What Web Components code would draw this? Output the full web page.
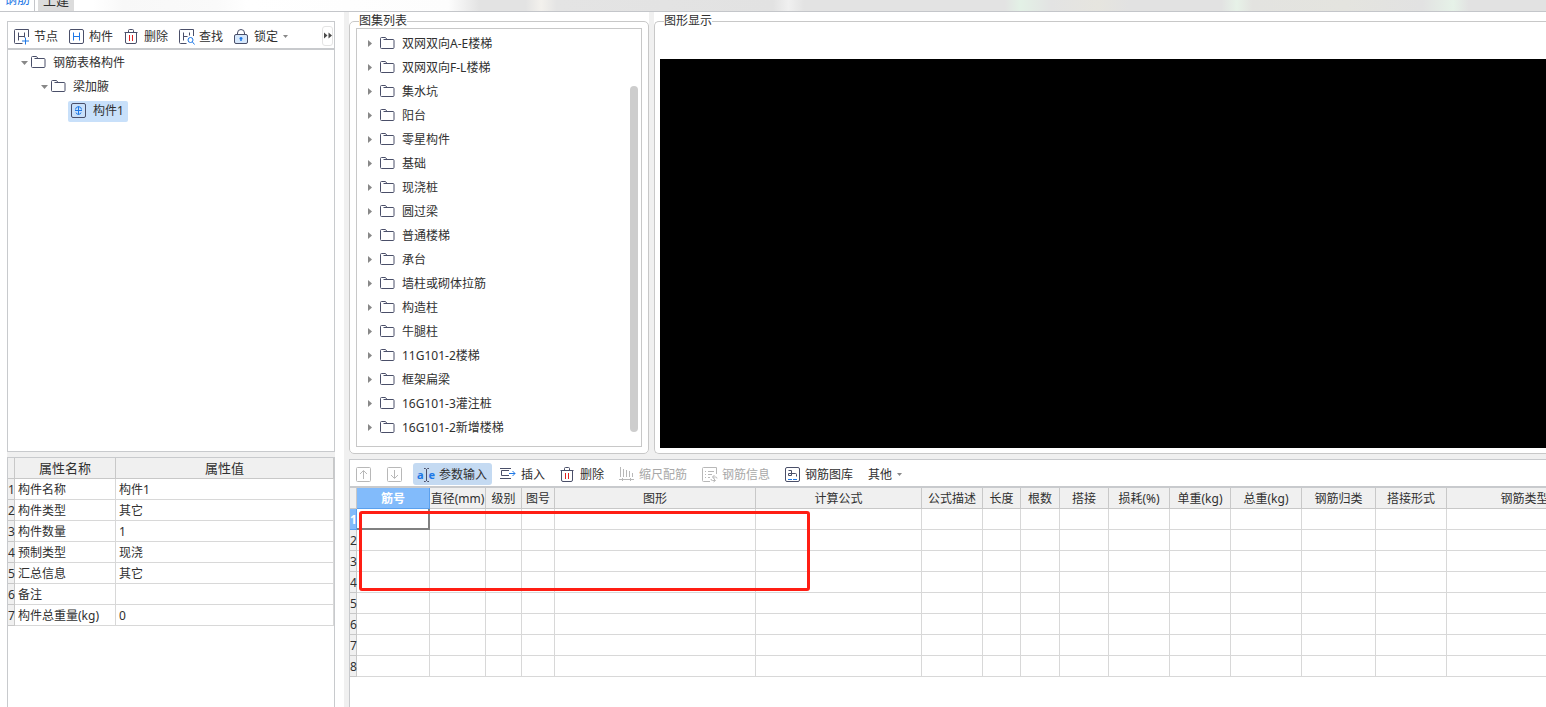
<!DOCTYPE html>
<html lang="zh-CN">
<head>
<meta charset="utf-8">
<title>表格输入</title>
<style>
html, body { margin: 0; height: 100%; }
body {
  font: 12px/20px "Noto Sans", "Noto Sans CJK SC", sans-serif;
  color: #303030; background: #fff; overflow: hidden;
  --line: #c8c8c8; --soft: #d8d8d8; --pane: #f0f0f0;
}
</style>
</head>
<body>
<rebar-app></rebar-app>
<script>
const define = (name, html) => customElements.define(name, class extends HTMLElement {
  connectedCallback() {
    if (this.shadowRoot) return;
    const t = document.createElement('template');
    t.innerHTML = typeof html === 'function' ? html(this) : html;
    this.attachShadow({ mode: 'open' }).append(t.content.cloneNode(true));
  }
});

const K = '#4a4f69', B = '#1e78e6', G = '#b8b8b8';
const icons = {
  node: `<path d="M8.500 14.500h-7q-1 0-1-1v-12q0-1 1-1h13V8M4.500 3.500v8M4.500 7.500h6M10.500 3.500v5" stroke="${K}"/><path d="M8 12h7M11.500 8.500v7" stroke="${B}"/>`,
  part: `<rect x=".5" y=".5" width="14" height="14" rx="1.500" stroke="${K}"/><path d="M4.500 3.500v8M10.500 3.500v8M4.500 7.500h6" stroke="${B}"/>`,
  bin: `<path d="M.5 3.500h13M4.500 3V1.500q0-1 1-1h3q1 0 1 1V3M1.500 4v9q0 1.500 1.500 1.500h8q1.500 0 1.500-1.500V4" stroke="${K}"/><path d="M5.500 6v6M8.500 6v6" stroke="#e02020"/>`,
  find: `<path d="M7.500 14.500h-6q-1 0-1-1v-12q0-1 1-1h13V7M4.500 3.500v8M4.500 7.500h4M10.500 3.500v3" stroke="${K}"/><circle cx="11.500" cy="11" r="2.500" stroke="${B}"/><path d="M13.500 13l2 2.500" stroke="${B}"/>`,
  lock: `<path d="M3.500 6V4a3.500 3.500 0 0 1 7 0v2" stroke="${K}"/><rect x=".5" y="5.500" width="13" height="9" rx="1.500" stroke="${K}" fill="#d6e8fc"/><path d="M7 8v4M5.500 9.500h3" stroke="${B}" stroke-width="1.500"/>`,
  folder: `<path d="M.5 2.500q0-1 1-1h4l1.500 2h6q1 0 1 1v7q0 1-1 1h-11.500q-1 0-1-1zM7 3.500H3.500" stroke="${K}"/>`,
  leaf: `<rect x=".5" y=".5" width="14" height="14" rx="1.500" stroke="${K}"/><path d="M7.500 3.500v8M4 7.500h7M7.500 3.500q-3 .5-3 3M7.500 3.500q3 .5 3 3M5 9.500q0 1.500 2.500 2q2.500-.5 2.500-2" stroke="${B}"/>`,
  up: `<rect x=".5" y=".5" width="14" height="14" rx="1" stroke="${G}"/><path d="M7.500 12V4M4 7l3.500-3.500L11 7" stroke="${G}"/>`,
  down: `<rect x=".5" y=".5" width="14" height="14" rx="1" stroke="${G}"/><path d="M7.500 3v8M4 8l3.500 3.500L11 8" stroke="${G}"/>`,
  insert: `<path d="M0 1.500h11M0 11.500h11M9 3.500H1.500v5H9" stroke="${K}"/><path d="M9 6.500h6M12.500 4l2.500 2.500L12.500 9" stroke="${B}"/>`,
  scale: `<path d="M1.500 0v10M4.500 2v8M7.500 3v7M10.500 4v6M13.500 6v4M0 12.500h15M3.500 11v3M11.500 11v3" stroke="${G}"/>`,
  info: `<path d="M8 14.500H1.500q-1 0-1-1v-12q0-1 1-1h13V7M3 4.500h1M6 4.500h6M3 7.500h1M6 7.500h4M3 10.500h1M6 10.500h2" stroke="${G}"/><path d="M12.500 8l-2 2 2 2M10.500 10h3q1.500 0 1.500 1.500M11.500 15l2-1.500-2-2M13 13.500h-2.500q-1.500 0-1.500-1.500" stroke="${G}"/>`,
  lib: `<rect x=".5" y=".5" width="14" height="14" rx="1.500" stroke="${K}"/><path d="M3.500 3.500h3v5h-3v-2h7q1 0 1 1v2" stroke="${K}"/><path d="M3 12.500h4M8 12.500h4" stroke="${B}"/>`,
  caret: `<path d="M0 6h5L2.500 9z" fill="#888"/>`,
  open: `<path d="M0 6h7L3.500 10z" fill="#888"/>`,
  shut: `<path d="M1 4v7l4-3.500z" fill="#888"/>`,
  more: `<path d="M0 4.500v6L3.500 7.500zM4.500 4.500v6L8 7.500z" fill="#4a4a4a"/>`
};
const widths = { caret: 5, open: 7, shut: 6, more: 8, insert: 16 };
define('ui-icon', el => {
  const n = el.getAttribute('name'), w = widths[n] || 15;
  return `<style>:host{display:block;flex:none;line-height:0}svg{overflow:visible}</style>
  <svg width="${w}" height="16" viewBox="0 0 ${w} 16" fill="none" aria-hidden="true">${icons[n]}</svg>`;
});

define('tool-button', el => `<style>
:host{display:block;flex:none}
button{display:flex;align-items:center;gap:5px;height:22px;box-sizing:border-box;padding:2px 5px 0;border:0;border-radius:3px;background:none;font:inherit;color:inherit}
button:disabled{color:#a8a8a8}
button.on{background:#c4daf2}
.ai{color:#1e78e6;font-weight:700;font-size:11px;display:flex;align-items:center;justify-content:center;width:16px}
.ai svg{flex:none}
</style>
<button type="button" ${el.hasAttribute('disabled') ? 'disabled' : ''} class="${el.hasAttribute('active') ? 'on' : ''}" aria-label="${el.getAttribute('label') || el.textContent}">
${el.hasAttribute('active')
  ? `<span class="ai">a<svg width="5" height="14" viewBox="0 0 5 14" fill="none" stroke="#4a4f69"><path d="M0 .5h1.500l1 1 1-1H5M2.500 1v12M0 13.500h1.500l1-1 1 1H5"/></svg>e</span>`
  : el.hasAttribute('icon') ? `<ui-icon name="${el.getAttribute('icon')}"></ui-icon>` : ''}
<slot></slot>${el.hasAttribute('menu') ? '<ui-icon name="caret"></ui-icon>' : ''}</button>`);

define('top-tabs', `<style>
:host{display:flex;height:12px;box-sizing:border-box;overflow:hidden;border-bottom:1px solid #c4c6ca;
background:linear-gradient(90deg,#fff 0%,#fff 6%,#f8f8f8 8%,#fafafa 14%,#fff 16%,#fdfdfd 29%,#e3e3e3 31%,#e3e3e3 34%,#f3f1ed 35%,#e4e4e4 36%,#e2e2e2 50%,#f0f0f0 51%,#e3e3e3 52%,#e3e3e3 65%,#e3f1e6 66%,#e3e3e3 68%,#e6e5df 71%,#e2e2e2 73%,#e2e2e2 79%,#e7f2e8 80%,#e3e3e0 81%,#e4e4df 87%,#e2e2e2 92%,#e6f2e8 94%,#e2e2e2 95%)}
nav{display:flex;gap:3px;align-items:flex-end}
a{display:block;height:20px;line-height:18px;padding:0 5px;text-decoration:none;color:#303030;background:#dcdcdc}
a[aria-current]{color:#1e78e6;background:#fff;border-right:1px solid #c4c6ca;padding:0 5px;height:22px}
a{font-size:13px}
a[aria-current]{padding:0 4px}
</style><nav><a href="#rebar" aria-current="page">钢筋</a><a href="#civil">土建</a></nav>`);

define('component-tree', `<style>
:host{display:flex;flex-direction:column;box-sizing:border-box;border:1px solid #c8cacd;min-height:0;background:#fff}
.bar{display:flex;align-items:center;gap:1px;height:28px;box-sizing:border-box;border-bottom:2px solid #c8cacd;padding:1px 0 0 1px}
.more{margin-left:auto;margin-right:1px;width:11px;height:20px;padding:0;display:grid;place-items:center;border:1px solid #e4e4e4;border-radius:3px;background:#fff}
ul{list-style:none;margin:0;padding:1px 0 0}
.row{display:flex;align-items:center;height:24px}
.row ui-icon+ui-icon{margin-left:3px}
.row span{margin-left:7px}
.l1{padding-left:13px}.l2{padding-left:33px}.l3{padding-left:60px}
.sel{display:flex;align-items:center;height:21px;padding:0 4px 0 3px;background:#c8e0fa;border-radius:2px}
</style>
<div class="bar" role="toolbar" aria-label="构件工具">
<tool-button icon="node">节点</tool-button><tool-button icon="part">构件</tool-button><tool-button icon="bin">删除</tool-button><tool-button icon="find">查找</tool-button><tool-button icon="lock" menu>锁定</tool-button>
<button type="button" class="more" aria-label="更多"><ui-icon name="more"></ui-icon></button></div>
<ul role="tree">
<li role="treeitem" class="row l1"><ui-icon name="open"></ui-icon><ui-icon name="folder"></ui-icon><span>钢筋表格构件</span></li>
<li role="treeitem" class="row l2"><ui-icon name="open"></ui-icon><ui-icon name="folder"></ui-icon><span>梁加腋</span></li>
<li role="treeitem" class="row l3"><div class="sel"><ui-icon name="leaf"></ui-icon><span>构件1</span></div></li>
</ul>`);

define('property-grid', () => {
  const rows = [['构件名称', '构件1'], ['构件类型', '其它'], ['构件数量', '1'], ['预制类型', '现浇'], ['汇总信息', '其它'], ['备注', ''], ['构件总重量(kg)', '0']];
  return `<style>
:host{display:block;box-sizing:border-box;border:1px solid #c8cacd;border-bottom:0;overflow:hidden;background:#fff}
table{width:100%;table-layout:fixed;border-collapse:separate;border-spacing:0}
th,td{box-sizing:border-box;height:21px;padding:2px 3px 0;line-height:18px;border-right:1px solid var(--soft);border-bottom:1px solid var(--soft);text-align:left;font-weight:400;white-space:nowrap}
thead th{padding:0;line-height:20px;background:var(--pane);border-color:var(--line);text-align:center;font-size:13px}
tbody th{background:var(--pane);border-color:var(--line);padding:2px 0 0}
</style><table><colgroup><col style="width:7px"><col style="width:101px"><col></colgroup>
<thead><tr><th></th><th>属性名称</th><th>属性值</th></tr></thead><tbody>
${rows.map((r, i) => `<tr><th>${i + 1}</th><td>${r[0]}</td><td>${r[1]}</td></tr>`).join('')}</tbody></table>`;
});

define('group-box', el => `<style>
:host{display:flex;flex-direction:column;min-width:0;min-height:0;background:linear-gradient(#fff 0 20px,#f0f0f0 20px)}
fieldset{flex:1;display:flex;min-width:0;min-height:0;box-sizing:border-box;margin:0;padding:0;border:1px solid var(--line);border-radius:5px;background:#fff}
:host([open-end]) fieldset{border-right:0;border-radius:5px 0 0 5px}
legend{margin-left:9px;padding:0;height:18px;line-height:18px}
</style><fieldset><legend>${el.getAttribute('label')}</legend><slot></slot></fieldset>`);

define('atlas-list', () => {
  const names = ['双网双向A-E楼梯', '双网双向F-L楼梯', '集水坑', '阳台', '零星构件', '基础', '现浇桩', '圆过梁', '普通楼梯', '承台', '墙柱或砌体拉筋', '构造柱', '牛腿柱', '11G101-2楼梯', '框架扁梁', '16G101-3灌注桩', '16G101-2新增楼梯'];
  return `<style>
:host{display:flex;flex:1;box-sizing:border-box;margin:-2px 6px 0;border:1px solid var(--line);min-width:0;background:#fff}
ul{flex:1;list-style:none;margin:0;padding:3px 0 0 10px;min-width:0}
li{display:flex;align-items:center;height:24px;white-space:nowrap}
li span{margin-left:7px}
li ui-icon+ui-icon{margin-left:7px}
.track{width:8px;margin:57px 3px 14px 0;display:flex}
.thumb{flex:1;border-radius:4px;background:#cdcdcd}
</style><ul role="tree">${names.map(n => `<li role="treeitem"><ui-icon name="shut"></ui-icon><ui-icon name="folder"></ui-icon><span>${n}</span></li>`).join('')}</ul>
<div class="track"><div class="thumb"></div></div>`;
});

define('drawing-view', `<style>:host{display:block;flex:1;background:#000}</style>`);

define('rebar-table', () => {
  const cols = [['筋号', 73], ['直径(mm)', 56], ['级别', 36], ['图号', 33], ['图形', 201], ['计算公式', 166], ['公式描述', 61], ['长度', 38], ['根数', 39], ['搭接', 49], ['损耗(%)', 61], ['单重(kg)', 61], ['总重(kg)', 71], ['钢筋归类', 74], ['搭接形式', 71], ['钢筋类型', 156]];
  return `<style>
:host{display:block;position:relative;overflow:hidden;flex:1;background:#fff}
table{table-layout:fixed;border-collapse:separate;border-spacing:0}
th,td{box-sizing:border-box;height:21px;padding:2px 0 0;line-height:18px;border-right:1px solid var(--soft);border-bottom:1px solid var(--soft);white-space:nowrap}
th{background:var(--pane);border-color:var(--line);font-weight:400}
thead th.on,tbody th.on{background:#82bbfb;border-color:#5aa0ee;color:#fff;font-weight:700}
td.focus{border-right:2px solid #808080;border-bottom:2px solid #808080}
.mark{position:absolute;left:9px;top:23px;width:451px;height:80px;box-sizing:border-box;border:3px solid #ff1e14;border-radius:3px;pointer-events:none}
</style><table style="width:${7 + cols.reduce((a, c) => a + c[1], 0)}px"><colgroup><col style="width:7px">${cols.map(c => `<col style="width:${c[1]}px">`).join('')}</colgroup>
<thead><tr><th></th>${cols.map((c, i) => `<th scope="col"${i ? '' : ' class="on"'}>${c[0]}</th>`).join('')}</tr></thead><tbody>
${[1, 2, 3, 4, 5, 6, 7, 8].map(n => `<tr><th scope="row"${n > 1 ? '' : ' class="on"'}>${n}</th>${cols.map((c, i) => `<td${n === 1 && !i ? ' class="focus"' : ''}></td>`).join('')}</tr>`).join('')}
</tbody></table><div class="mark"></div>`;
});

define('rebar-panel', `<style>
:host{display:flex;flex-direction:column;min-width:0;min-height:0;box-sizing:border-box;border:solid #c8cacd;border-width:1px 0 0 1px;background:#fff}
.bar{display:flex;align-items:center;height:28px;box-sizing:border-box;border-bottom:2px solid #c8cacd;padding:1px 0 0 1px}
.step{display:flex;gap:6px;margin-right:6px}
.edit{display:flex;gap:3px}
.rest{display:flex;gap:5px;margin-left:5px}
</style><div class="bar" role="toolbar" aria-label="钢筋工具">
<div class="step"><tool-button icon="up" disabled label="上移"></tool-button><tool-button icon="down" disabled label="下移"></tool-button></div>
<div class="edit"><tool-button active>参数输入</tool-button><tool-button icon="insert">插入</tool-button></div>
<div class="rest"><tool-button icon="bin">删除</tool-button><tool-button icon="scale" disabled>缩尺配筋</tool-button><tool-button icon="info" disabled>钢筋信息</tool-button><tool-button icon="lib">钢筋图库</tool-button><tool-button menu>其他</tool-button></div>
</div><rebar-table></rebar-table>`);

define('rebar-app', `<style>
:host{display:flex;flex-direction:column;height:100vh;overflow:hidden}
main{flex:1;display:flex;min-height:0}
.left{flex:none;width:328px;margin:9px 9px 0 7px;display:grid;grid-template-rows:431fr 250fr;gap:5px;background:var(--pane)}
.right{flex:1;min-width:0;display:grid;grid-template-rows:442fr 248fr;gap:5px;background:var(--pane);padding-left:5px}
.top{display:grid;grid-template-columns:300px 1fr;gap:5px;min-width:0;min-height:0}
.atlas{display:flex;flex:1;padding:0 0 6px;min-width:0}
.view{display:flex;flex:1;padding:29px 0 5px 5px;min-width:0}
</style>
<top-tabs></top-tabs>
<main><section class="left"><component-tree></component-tree><property-grid></property-grid></section>
<section class="right"><div class="top">
<group-box label="图集列表"><div class="atlas"><atlas-list></atlas-list></div></group-box>
<group-box label="图形显示" open-end><div class="view"><drawing-view></drawing-view></div></group-box>
</div><rebar-panel></rebar-panel></section></main>`);
</script>
</body>
</html>
